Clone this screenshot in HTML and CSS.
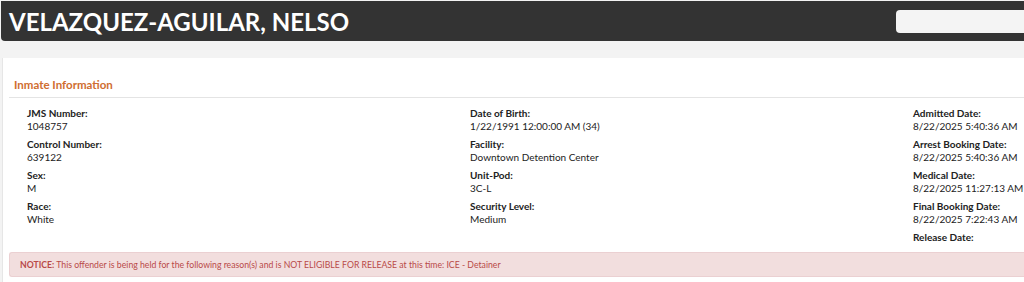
FILE: index.html
```html
<!DOCTYPE html>
<html lang="en">
<head>
  <meta charset="UTF-8">
  <title>Inmate Details</title>
  <link rel="stylesheet" href="styles.css">
</head>
<body>
  <div class="page-header">
    <h1>VELAZQUEZ-AGUILAR, NELSO</h1>
    <input class="search" type="text" />
  </div>
  <div class="panel">
    <div class="panel-title">Inmate Information</div>
    <div class="info-grid">
      <div class="info-col">
        <div class="field"><div class="label">JMS Number:</div><div class="value">1048757</div></div>
        <div class="field"><div class="label">Control Number:</div><div class="value">639122</div></div>
        <div class="field"><div class="label">Sex:</div><div class="value">M</div></div>
        <div class="field"><div class="label">Race:</div><div class="value">White</div></div>
      </div>
      <div class="info-col">
        <div class="field"><div class="label">Date of Birth:</div><div class="value">1/22/1991 12:00:00 AM (34)</div></div>
        <div class="field"><div class="label">Facility:</div><div class="value">Downtown Detention Center</div></div>
        <div class="field"><div class="label">Unit-Pod:</div><div class="value">3C-L</div></div>
        <div class="field"><div class="label">Security Level:</div><div class="value">Medium</div></div>
      </div>
      <div class="info-col">
        <div class="field"><div class="label">Admitted Date:</div><div class="value">8/22/2025 5:40:36 AM</div></div>
        <div class="field"><div class="label">Arrest Booking Date:</div><div class="value">8/22/2025 5:40:36 AM</div></div>
        <div class="field"><div class="label">Medical Date:</div><div class="value">8/22/2025 11:27:13 AM</div></div>
        <div class="field"><div class="label">Final Booking Date:</div><div class="value">8/22/2025 7:22:43 AM</div></div>
        <div class="field"><div class="label">Release Date:</div></div>
      </div>
    </div>
    <div class="notice">
      <b>NOTICE:</b> This offender is being held for the following reason(s) and is NOT ELIGIBLE FOR RELEASE at this time: ICE - Detainer
    </div>
  </div>
</body>
</html>
```

FILE: styles.css
```css
html {
  font-family: Lato, "Open Sans", sans-serif;
}

body {
  margin: 0;
  background-color: #f3f3f3;
  color: #222;
  overflow: hidden;
}

.page-header {
  display: flex;
  justify-content: space-between;
  align-items: center;
  height: 40px;
  margin: 1px 0 0 1px;
  padding-left: 8px;
  background-color: #333;
  border-radius: 0 0 0 4px;
  overflow: hidden;
}
.page-header h1 {
  margin: 0;
  color: white;
  font-size: 24px;
  font-weight: bold;
}
.search {
  width: 140px;
  height: 23px;
  margin-right: -12px;
  box-sizing: border-box;
  border: none;
  border-radius: 4px;
  background-color: #f4f4f4;
  outline: none;
}

.panel {
  margin: 17px 0 0 2px;
  padding: 0 0 10px 6px;
  min-height: 220px;
  background-color: white;
  border-left: 1px solid #e6e6e6;
}
.panel-title {
  padding: 20px 0 6px 5px;
  color: #cf6d30;
  font-size: 11.5px;
  font-weight: bold;
  border-bottom: 1px solid #e4e4e4;
}

.info-grid {
  display: grid;
  grid-template-columns: 443px 443px 443px;
  padding: 9px 0 0 18px;
  font-size: 10px;
}
.field {
  margin-bottom: 5px;
  line-height: 13px;
}
.label {
  font-weight: bold;
}

.notice {
  margin-top: 3px;
  padding: 6px 10px;
  line-height: 11px;
  background-color: #f2dede;
  border: 1px solid #ebd0d2;
  border-right: none;
  border-radius: 3px 0 0 3px;
  color: #b94a48;
  font-size: 8.7px;
  white-space: nowrap;
}
```
